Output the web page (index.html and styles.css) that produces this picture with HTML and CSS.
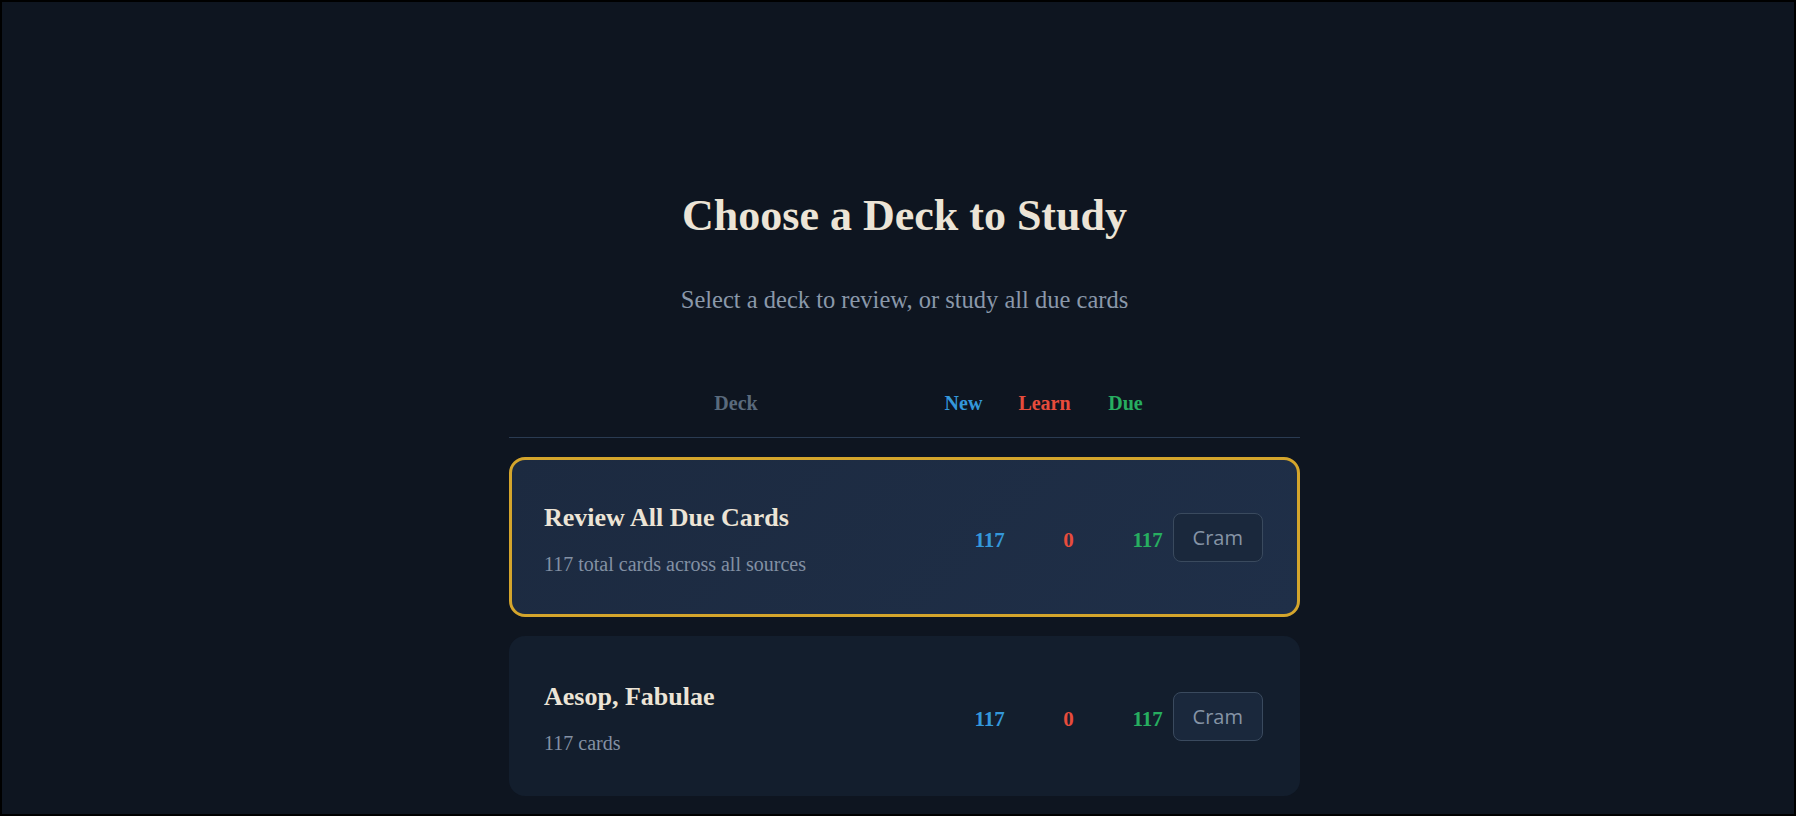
FILE: index.html
```html
<!DOCTYPE html>
<html lang="en">
<head>
<meta charset="utf-8">
<title>Choose a Deck to Study</title>
<link rel="stylesheet" href="styles.css">
</head>
<body>
<div class="app">
  <main class="picker">
    <h1 class="picker-title">Choose a Deck to Study</h1>
    <p class="picker-sub">Select a deck to review, or study all due cards</p>

    <div class="deck-head">
      <span class="head-deck">Deck</span>
      <span class="head-new">New</span>
      <span class="head-learn">Learn</span>
      <span class="head-due">Due</span>
      <span class="head-action"></span>
    </div>

    <div class="deck-list">
      <div class="deck-card deck-card--all">
        <div class="deck-info">
          <h2 class="deck-name">Review All Due Cards</h2>
          <p class="deck-meta">117 total cards across all sources</p>
        </div>
        <div class="deck-stats">
          <span class="stat stat-new">117</span>
          <span class="stat stat-learn">0</span>
          <span class="stat stat-due">117</span>
        </div>
        <button class="cram-btn">Cram</button>
      </div>

      <div class="deck-card">
        <div class="deck-info">
          <h2 class="deck-name">Aesop, Fabulae</h2>
          <p class="deck-meta">117 cards</p>
        </div>
        <div class="deck-stats">
          <span class="stat stat-new">117</span>
          <span class="stat stat-learn">0</span>
          <span class="stat stat-due">117</span>
        </div>
        <button class="cram-btn">Cram</button>
      </div>
    </div>
  </main>
</div>
</body>
</html>
```

FILE: styles.css
```css
html, body {
  margin: 0;
  height: 100%;
}

body {
  background: #000;
  font-family: "Liberation Serif", "Times New Roman", serif;
}

.app {
  height: 100vh;
  box-sizing: border-box;
  border: 2px solid #000;
  background: #0e1520;
  overflow: hidden;
  padding-left: 13px;
}

.picker {
  width: 791px;
  margin: 0 auto;
  padding-top: 188px;
}

.picker-title {
  margin: 0;
  font-size: 44px;
  line-height: 52px;
  font-weight: 700;
  text-align: center;
  color: #ece4d6;
}

.picker-sub {
  margin: 44px 0 0;
  font-size: 24.5px;
  line-height: 28px;
  text-align: center;
  color: #8a98aa;
}

.deck-head {
  margin-top: 77px;
  display: grid;
  grid-template-columns: 1fr 81px 81px 81px 100px;
  padding: 0 34px 22px 40px;
  border-bottom: 1px solid #2a3b52;
  font-size: 20px;
  line-height: 24px;
  font-weight: 700;
  text-align: center;
}

.head-deck { color: #5a6a7c; }
.head-new { color: #3498db; }
.head-learn { color: #e74c3c; }
.head-due { color: #27ae60; }

.deck-list {
  margin-top: 19px;
  display: flex;
  flex-direction: column;
  gap: 19px;
}

.deck-card {
  display: flex;
  align-items: center;
  padding: 38px 34px 38px 32px;
  border: 3px solid transparent;
  border-radius: 16px;
  background: #131e2d;
}

.deck-card--all {
  border-color: #d4a52c;
  background: linear-gradient(135deg, #1c2a40 0%, #1f2f48 100%);
}

.deck-info {
  flex: 1;
  padding-top: 5px;
}

.deck-name {
  margin: 0;
  font-size: 26px;
  line-height: 30px;
  font-weight: 700;
  color: #ece4d6;
}

.deck-meta {
  margin: 19px 0 0;
  font-size: 20px;
  line-height: 24px;
  color: #8391a4;
}

.deck-stats {
  display: flex;
  gap: 29px;
  padding-top: 6px;
}

.stat {
  width: 50px;
  text-align: center;
  font-size: 21px;
  line-height: 28px;
  font-weight: 700;
}

.stat-new { color: #3498db; }
.stat-learn { color: #e74c3c; }
.stat-due { color: #27ae60; }

.cram-btn {
  font-family: "Open Sans", "Noto Sans", sans-serif;
  font-size: 20px;
  line-height: 27px;
  padding: 10px 19px;
  border: 1px solid #3a4a5e;
  border-radius: 8px;
  background: #1a283c;
  color: #8694a6;
  cursor: pointer;
}
```
